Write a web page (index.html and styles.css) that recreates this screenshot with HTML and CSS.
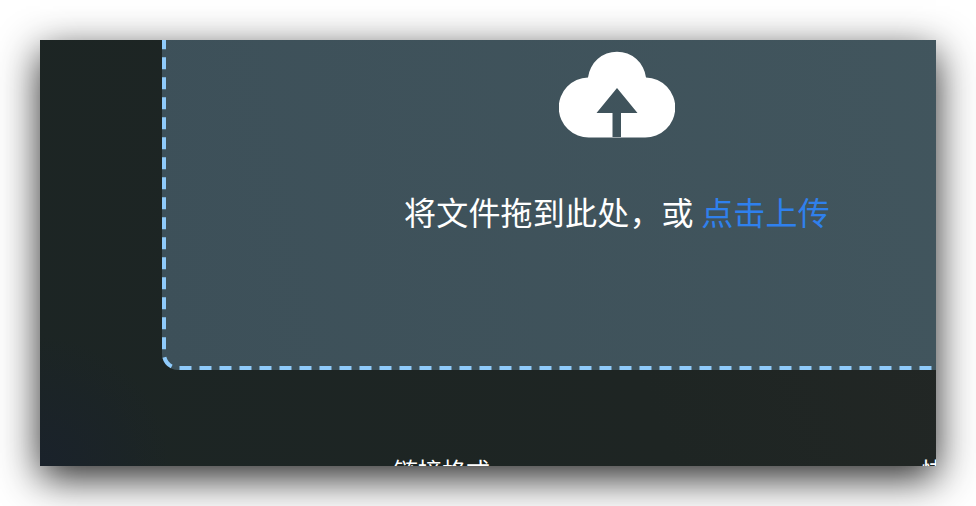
FILE: index.html
```html
<!DOCTYPE html>
<html lang="zh-CN">
<head>
 <meta charset="utf-8">
 <title>上传</title>
 <link rel="stylesheet" href="styles.css">
</head>
<body>
 <div class="window">
  <div class="dropzone">
   <svg class="dashes" width="910" height="370" viewBox="0 0 910 370">
    <path d="M2 17.33V354A14 14 0 0 0 16 368H910"></path>
   </svg>
   <svg class="cloud" width="116" height="87" viewBox="559 51 116 87">
    <path fill-rule="evenodd" d="M589.5 137.5A30 30 0 0 1 588 77.5A29.2 29.2 0 0 1 646 77.5A30 30 0 0 1 644.5 137.5ZM617 88L637.5 113H621V138H612.5V113H596.5Z"></path>
   </svg>
   <p class="hint">将文件拖到此处，或 <a class="hint-link">点击上传</a></p>
  </div>
  <div class="fields">
   <span class="field-label">链接格式</span>
   <span class="field-label">快捷方式</span>
  </div>
 </div>
</body>
</html>
```

FILE: styles.css
```css
/* Page */
body {
 margin: 0;
 height: 506px;
 overflow: hidden;
 background-color: #fff;
 font-family: "Noto Sans CJK SC", "Noto Sans", sans-serif;
}

/* Window */
.window {
 width: 896px;
 height: 426px;
 margin: 40px;
 overflow: hidden;
 background:
  radial-gradient(circle at 0 100%, #1a222b 0, rgba(26, 34, 43, 0) 130px),
  linear-gradient(70deg, #1c2524 0%, #1e2523 60%, #232725 100%);
 box-shadow: 0 12px 38px rgba(0, 0, 0, 0.85);
}

/* Upload area */
.dropzone {
 position: relative;
 box-sizing: border-box;
 width: 910px;
 height: 370px;
 margin: -40px 0 0 122px;
 padding-top: 51px;
 border-radius: 0 0 0 16px;
 background: linear-gradient(80deg, #3d5059 0%, #42565e 100%);
 text-align: center;
}

.dashes {
 position: absolute;
 top: 0;
 left: 0;
}

.dashes path {
 fill: none;
 stroke: #8fcbfb;
 stroke-width: 4;
 stroke-dasharray: 12 8;
}

.cloud {
 display: block;
 margin: 0 auto;
 fill: #fff;
}

.hint {
 margin: 49px 0 0;
 font-size: 32px;
 line-height: 48px;
 letter-spacing: 0.2px;
 color: #fff;
}

.hint-link {
 color: #2f80ed;
}

/* Labels below the area */
.fields {
 display: flex;
 gap: 431px;
 margin-top: 82px;
 padding-left: 354px;
 white-space: nowrap;
}

.field-label {
 font-size: 24px;
 line-height: 36px;
 color: #fff;
}
```
